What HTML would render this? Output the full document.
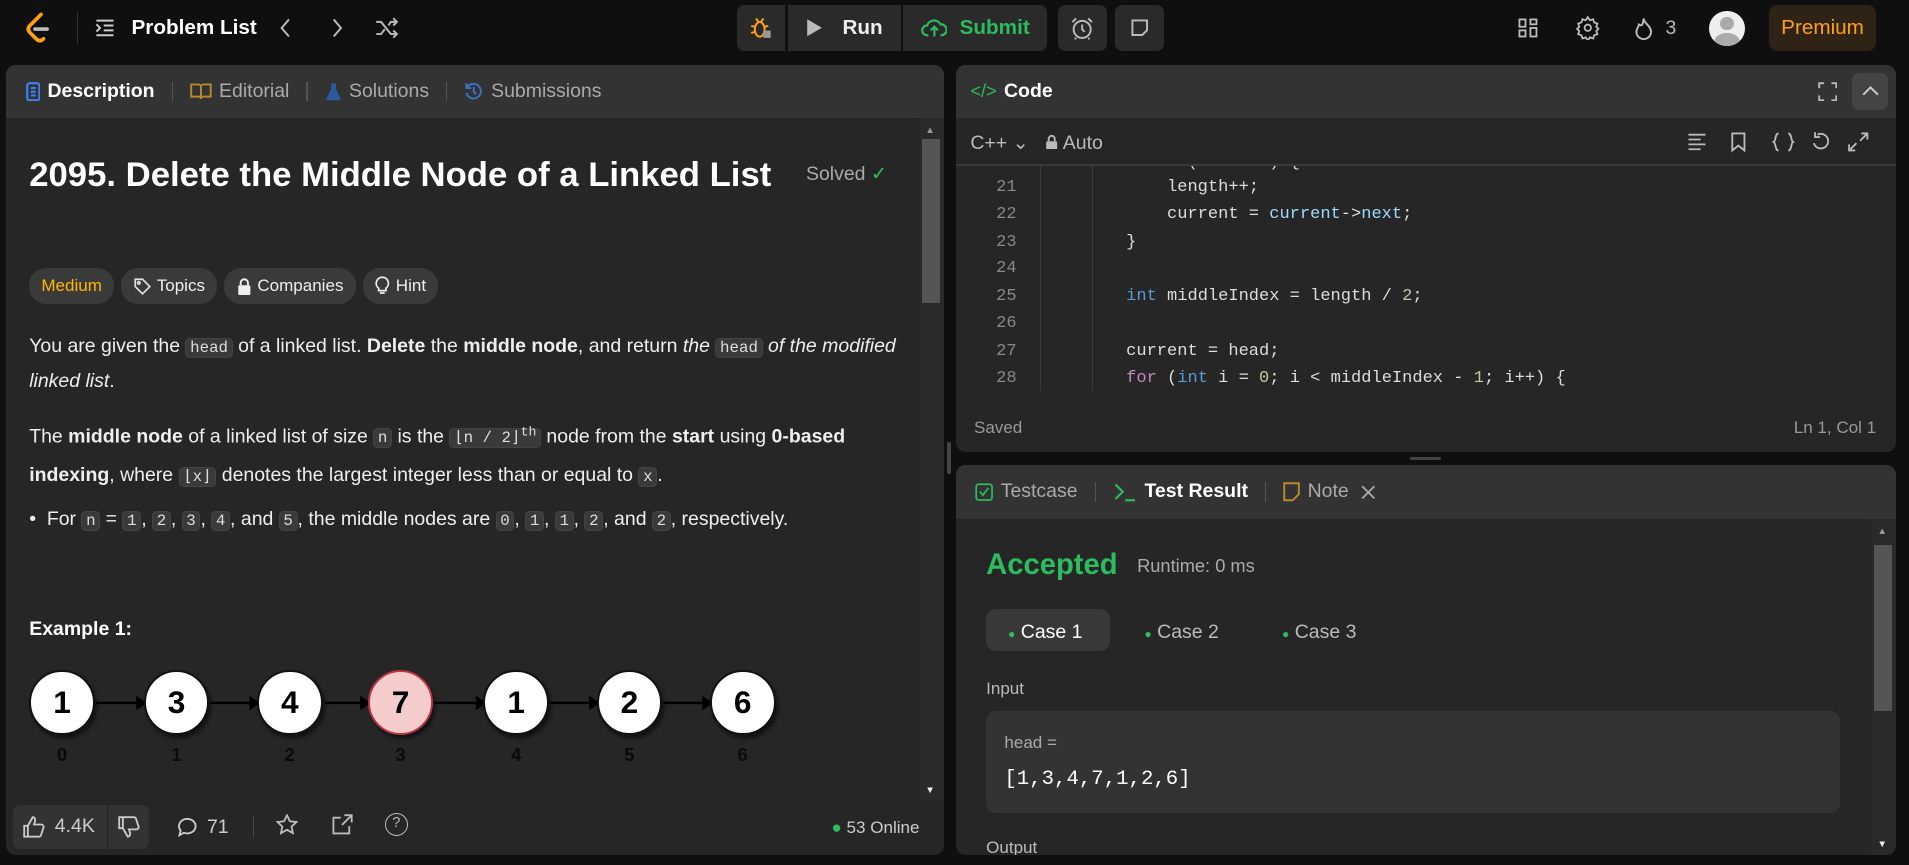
<!DOCTYPE html>
<html><head><meta charset="utf-8"><style>
*{box-sizing:border-box;margin:0;padding:0}
html,body{width:1909px;height:865px;overflow:hidden;background:#0f0f0f}
#r{zoom:1.21747;width:1568px;height:710px;position:relative;font-family:"Liberation Sans",sans-serif;color:#eee;font-size:14px}
.a{position:absolute}
.panel{position:absolute;background:#262626;border-radius:8px;overflow:hidden}
.hd{position:absolute;left:0;right:0;top:0;height:44px;background:#333;display:flex;align-items:center}
.tb{display:flex;align-items:center;gap:6px;color:#aaa;font-size:16px}
.sep{width:1px;height:16px;background:#555;margin:0 8px}
.code{font-family:"Liberation Mono",monospace}
.ic{background:#3a3a3a;border-radius:4px;padding:0 3px;font-family:"Liberation Mono",monospace;font-size:13px;color:#ddd;border:1px solid #444}
.pill{background:#3a3a3a;border-radius:14px;height:30px;padding:0 10px;display:flex;align-items:center;gap:5px;font-size:14px;color:#eee}
.node{position:absolute;width:54px;height:54px;border-radius:50%;background:#fff;border:2px solid #111;color:#000;font:bold 26px "Liberation Sans",sans-serif;display:flex;align-items:center;justify-content:center;box-shadow:2px 3px 3px rgba(0,0,0,.5)}
.idx{position:absolute;width:54px;text-align:center;color:#0a0a0a;font:bold 15px "Liberation Sans",sans-serif}
.ln{position:absolute;left:0;width:50px;text-align:right;color:#888}
.cl{position:absolute;left:140px;white-space:pre;color:#ddd}
.btn{position:absolute;top:4px;height:38px;background:#2a2a2a;display:flex;align-items:center;justify-content:center}
</style></head><body><div id="r">
<!-- top bar -->
<svg class="a" style="left:20px;top:10px" width="24" height="26" viewBox="0 0 24 26"><path d="M14 2 L5 11 Q2 14 5 17 L10 22 Q13 25 16 22" fill="none" stroke="#ffa116" stroke-width="3" stroke-linecap="round"/><path d="M9 14 H19" stroke="#bbb" stroke-width="3" stroke-linecap="round"/></svg>
<div class="a" style="left:63px;top:10px;width:1px;height:26px;background:#333"></div>
<svg class="a" style="left:77px;top:14px" width="18" height="18" viewBox="0 0 18 18" fill="none" stroke="#ccc" stroke-width="1.6"><path d="M2 3h14M8 7h8M8 11h8M2 15h14M2 6l3 3-3 3"/></svg>
<div class="a" style="left:108px;top:13px;font-size:17px;font-weight:bold;color:#fff">Problem List</div>
<svg class="a" style="left:228px;top:14px" width="12" height="18" viewBox="0 0 12 18" fill="none" stroke="#bbb" stroke-width="1.6"><path d="M9 2 3 9l6 7"/></svg>
<svg class="a" style="left:271px;top:14px" width="12" height="18" viewBox="0 0 12 18" fill="none" stroke="#bbb" stroke-width="1.6"><path d="M3 2l6 7-6 7"/></svg>
<svg class="a" style="left:308px;top:14px" width="20" height="18" viewBox="0 0 20 18" fill="none" stroke="#bbb" stroke-width="1.6"><path d="M1 4h4l8 10h5M1 14h4l3-4M11 7l2-3h5M15 1l3 3-3 3M15 11l3 3-3 3"/></svg>
<div class="btn" style="left:605px;width:40px;border-radius:6px 0 0 6px"><svg width="18" height="20" viewBox="0 0 18 20" fill="none" stroke="#ffa116" stroke-width="1.6"><ellipse cx="8" cy="11" rx="4" ry="6"/><path d="M1 8l3 1M1 14l3-1M15 8l-3 1M5 2l2 3M11 2l-2 3"/><rect x="11" y="12" width="6" height="6" fill="#999" stroke="none"/></svg></div>
<div class="btn" style="left:647px;width:93px;font-weight:bold;font-size:17px;color:#eee"><svg width="14" height="16" viewBox="0 0 14 16" style="margin-right:16px"><path d="M1 1l12 7-12 7z" fill="#bbb"/></svg>Run</div>
<div class="btn" style="left:742px;width:118px;border-radius:0 6px 6px 0;font-weight:bold;font-size:17px;color:#2cbb5d"><svg width="22" height="18" viewBox="0 0 22 18" style="margin-right:10px" fill="none" stroke="#2cbb5d" stroke-width="1.8"><path d="M6 15H5a4 4 0 0 1 0-8 6 6 0 0 1 11-1 4.5 4.5 0 0 1 1 9h-1"/><path d="M11 16V8M8 11l3-3 3 3"/></svg>Submit</div>
<div class="btn" style="left:869px;width:40px;border-radius:6px"><svg width="20" height="20" viewBox="0 0 20 20" fill="none" stroke="#bbb" stroke-width="1.6"><circle cx="10" cy="11" r="7"/><path d="M10 7v4l2 2M2 5l3-3M18 5l-3-3M5 18l-1 1M15 18l1 1"/></svg></div>
<div class="btn" style="left:916px;width:40px;border-radius:6px"><svg width="16" height="16" viewBox="0 0 16 16" fill="none" stroke="#bbb" stroke-width="1.6"><path d="M2 2h12v8l-4 4H2z"/></svg></div>
<svg class="a" style="left:1246px;top:14px" width="18" height="18" viewBox="0 0 18 18" fill="none" stroke="#bbb" stroke-width="1.5"><rect x="2" y="2" width="5" height="6"/><rect x="11" y="2" width="5" height="4"/><rect x="2" y="11" width="5" height="5"/><rect x="11" y="9" width="5" height="7"/></svg>
<svg class="a" style="left:1294px;top:12px" width="21" height="21" viewBox="0 0 24 24" fill="none" stroke="#bbb" stroke-width="1.7"><circle cx="12" cy="12" r="3"/><path d="M12 2l2 3 3-1 1 3 3 1-1 3 2 2-2 2 1 3-3 1-1 3-3-1-2 3-2-3-3 1-1-3-3-1 1-3-2-2 2-2-1-3 3-1 1-3 3 1z"/></svg>
<svg class="a" style="left:1342px;top:13px" width="16" height="20" viewBox="0 0 16 20" fill="none" stroke="#bbb" stroke-width="1.6"><path d="M8 2c0 4 6 6 6 11a6 6 0 0 1-12 0c0-3 2-4 2-6 2 1 3 2 4-5z"/></svg>
<div class="a" style="left:1368px;top:14px;font-size:16px;color:#bbb">3</div>
<div class="a" style="left:1404px;top:9px;width:29px;height:29px;border-radius:50%;background:#eee;overflow:hidden"><div class="a" style="left:9px;top:5px;width:11px;height:11px;border-radius:50%;background:#aaa"></div><div class="a" style="left:4px;top:18px;width:21px;height:16px;border-radius:50%;background:#aaa"></div></div>
<div class="a" style="left:1453px;top:4px;width:88px;height:38px;border-radius:7px;background:#2e2314;color:#ffa116;font-size:17px;display:flex;align-items:center;justify-content:center">Premium</div>

<!-- left panel -->
<div class="panel" style="left:5px;top:53px;width:770px;height:649px">
 <div class="hd" style="padding-left:16px"><div class="tb">
  <svg width="12" height="16" viewBox="0 0 12 16" fill="none" stroke="#3b82f6" stroke-width="1.8"><rect x="1" y="1" width="10" height="14" rx="2"/><path d="M4 5h4M4 8h4M4 11h4"/></svg><b style="color:#fff">Description</b><span class="sep"></span>
  <svg width="18" height="16" viewBox="0 0 18 16" fill="none" stroke="#b58a2a" stroke-width="1.6"><path d="M1 2h6a2 2 0 0 1 2 2v10a2 2 0 0 0-2-2H1zM17 2h-6a2 2 0 0 0-2 2v10a2 2 0 0 1 2-2h6z"/></svg>Editorial<span class="sep"></span>
  <svg width="14" height="16" viewBox="0 0 14 16"><path d="M5 1h4v5l4 8a1 1 0 0 1-1 1H2a1 1 0 0 1-1-1l4-8z" fill="#2a5aa0"/></svg>Solutions<span class="sep"></span>
  <svg width="16" height="16" viewBox="0 0 16 16" fill="none" stroke="#3a72c4" stroke-width="1.6"><path d="M3 4a6 6 0 1 1-1 5M2 1v4h4M8 4v4l2 2"/></svg>Submissions</div></div>
 <div class="a" style="right:0;top:44px;width:20px;height:561px;background:#2a2a2a"><div class="a" style="left:2px;top:17px;width:15px;height:135px;background:#555"></div><div class="a" style="left:5px;top:6px;color:#999;font-size:8px">▲</div><div class="a" style="left:5px;bottom:4px;color:#eee;font-size:8px">▼</div></div>
 <div class="a" style="left:19px;top:75px;font-size:28.5px;font-weight:bold;color:#fff">2095. Delete the Middle Node of a Linked List</div>
 <div class="a" style="left:657px;top:80px;font-size:16px;color:#aaa">Solved <span style="color:#2cbb5d">✓</span></div>
 <div class="a" style="left:19px;top:167px;display:flex;gap:6px"><div class="pill" style="color:#ffb800">Medium</div>
  <div class="pill"><svg width="14" height="14" viewBox="0 0 14 14" fill="none" stroke="#ddd" stroke-width="1.4"><path d="M1 1h6l6 6-6 6-6-6z"/><circle cx="4" cy="4" r="1"/></svg>Topics</div>
  <div class="pill"><svg width="12" height="14" viewBox="0 0 12 14"><path d="M3 6V4a3 3 0 0 1 6 0v2" fill="none" stroke="#eee" stroke-width="1.6"/><rect x="1" y="6" width="10" height="8" rx="1" fill="#eee"/></svg>Companies</div>
  <div class="pill"><svg width="12" height="16" viewBox="0 0 12 16" fill="none" stroke="#eee" stroke-width="1.4"><path d="M6 1a5 5 0 0 0-3 9v2h6v-2a5 5 0 0 0-3-9zM4 14h4"/></svg>Hint</div></div>
 <div class="a" style="left:19px;top:218px;width:712px;font-size:16px;line-height:27px;color:#eee">You are given the <span class="ic">head</span> of a linked list. <b>Delete</b> the <b>middle node</b>, and return <i>the</i> <span class="ic">head</span> <i>of the modified linked list</i>.</div>
 <div class="a" style="left:19px;top:288px;width:712px;font-size:16px;line-height:30px;color:#eee">The <b>middle node</b> of a linked list of size <span class="ic">n</span> is the <span class="ic">⌊n / 2⌋<sup>th</sup></span> node from the <b>start</b> using <b>0-<wbr>based indexing</b>, where <span class="ic">⌊x⌋</span> denotes the largest integer less than or equal to <span class="ic">x</span>.</div>
 <div class="a" style="left:19px;top:359px;font-size:16px;line-height:28px;color:#eee">•&nbsp;&nbsp;For <span class="ic">n</span> = <span class="ic">1</span>, <span class="ic">2</span>, <span class="ic">3</span>, <span class="ic">4</span>, and <span class="ic">5</span>, the middle nodes are <span class="ic">0</span>, <span class="ic">1</span>, <span class="ic">1</span>, <span class="ic">2</span>, and <span class="ic">2</span>, respectively.</div>
 <div class="a" style="left:19px;top:455px;font-size:16px;font-weight:bold;color:#fff">Example 1:</div>
 <svg class="a" style="left:0;top:0" width="760" height="640"><g stroke="#000" stroke-width="2" fill="#000"><path d="M74 524H110M168 524H203M262 524H294M352 524H389M447 524H482M540 524H575"/><path d="M114 524l-6-4v8zM207 524l-6-4v8zM298 524l-6-4v8zM393 524l-6-4v8zM486 524l-6-4v8zM579 524l-6-4v8z"/></g></svg>
 <div class="node" style="left:19px;top:497px">1</div><div class="node" style="left:113px;top:497px">3</div><div class="node" style="left:206px;top:497px">4</div><div class="node" style="left:297px;top:497px;background:#f5cccc;border-color:#b34">7</div><div class="node" style="left:392px;top:497px">1</div><div class="node" style="left:485px;top:497px">2</div><div class="node" style="left:578px;top:497px">6</div>
 <div class="idx" style="left:19px;top:558px">0</div><div class="idx" style="left:113px;top:558px">1</div><div class="idx" style="left:206px;top:558px">2</div><div class="idx" style="left:297px;top:558px">3</div><div class="idx" style="left:392px;top:558px">4</div><div class="idx" style="left:485px;top:558px">5</div><div class="idx" style="left:578px;top:558px">6</div>
 <div class="a" style="left:6px;top:608px;height:36px;background:#333;border-radius:6px;display:flex;align-items:center;padding:0 8px;gap:8px;font-size:16px;color:#ccc">
  <svg width="18" height="18" viewBox="0 0 18 18" fill="none" stroke="#ccc" stroke-width="1.5"><path d="M1 8h3v9H1zM4 8l4-7c2 0 2 2 2 3l-1 3h6a2 2 0 0 1 2 2l-2 6a2 2 0 0 1-2 2H4"/></svg>4.4K
  <span style="border-left:1px solid #222;height:36px;margin-left:2px"></span>
  <svg width="18" height="18" viewBox="0 0 18 18" fill="none" stroke="#ccc" stroke-width="1.5"><path d="M1 1h3v9H1zM4 10l4 7c2 0 2-2 2-3l-1-3h6a2 2 0 0 0 2-2l-2-6a2 2 0 0 0-2-2H4"/></svg></div>
 <div class="a" style="left:140px;top:617px;font-size:16px;color:#ccc;display:flex;gap:8px;align-items:center"><svg width="17" height="17" viewBox="0 0 17 17" fill="none" stroke="#ccc" stroke-width="1.5"><path d="M8.5 1.5a7 6 0 1 1-3 11.5L2 15l1-4a7 6 0 0 1 5.5-9.5z"/></svg>71</div>
 <div class="a" style="left:203px;top:617px;width:1px;height:18px;background:#444"></div>
 <svg class="a" style="left:222px;top:616px" width="18" height="18" viewBox="0 0 18 18" fill="none" stroke="#bbb" stroke-width="1.5"><path d="M9 1l2.4 5 5.4.6-4 3.7 1.1 5.4L9 13l-4.9 2.7 1.1-5.4-4-3.7L6.6 6z"/></svg>
 <svg class="a" style="left:267px;top:616px" width="18" height="18" viewBox="0 0 18 18" fill="none" stroke="#bbb" stroke-width="1.5"><path d="M8 3H2v13h13v-6M11 1h6v6M17 1l-8 8"/></svg>
 <div class="a" style="left:311px;top:615px;width:19px;height:19px;border:1.6px solid #bbb;border-radius:50%;color:#bbb;font-size:12px;text-align:center;line-height:16px">?</div>
 <div class="a" style="left:678px;top:619px;font-size:14px;color:#ccc"><span style="color:#2cbb5d">●</span> 53 Online</div>
</div>

<!-- code panel -->
<div class="panel" style="left:785px;top:53px;width:772px;height:318px">
 <div class="hd" style="padding-left:12px"><span style="color:#2cbb5d;font-size:15px">&lt;/&gt;</span><b style="margin-left:6px;font-size:16px;color:#fff">Code</b></div>
 <svg class="a" style="right:48px;top:14px" width="16" height="16" viewBox="0 0 16 16" fill="none" stroke="#bbb" stroke-width="1.5"><path d="M1 5V1h4M11 1h4v4M15 11v4h-4M5 15H1v-4"/></svg>
 <div class="a" style="right:6px;top:7px;width:30px;height:30px;background:#444;border-radius:6px"><svg class="a" style="left:8px;top:10px" width="14" height="9" viewBox="0 0 14 9" fill="none" stroke="#ccc" stroke-width="1.6"><path d="M1 8l6-6 6 6"/></svg></div>
 <div class="a" style="left:12px;top:55px;font-size:16px;color:#bbb">C++ ⌄ &nbsp;&nbsp;<svg width="11" height="13" viewBox="0 0 11 13"><path d="M3 6V4a2.5 2.5 0 0 1 5 0v2" fill="none" stroke="#bbb" stroke-width="1.5"/><rect x="1" y="6" width="9" height="7" rx="1" fill="#bbb"/></svg> Auto</div>
 <svg class="a" style="right:12px;top:55px" width="160" height="18" viewBox="0 0 160 18" fill="none" stroke="#bbb" stroke-width="1.5"><path d="M2 3h14M2 7h10M2 11h14M2 15h10"/><path d="M38 2h10v14l-5-4-5 4z"/><path d="M76 2c-3 0-2 6-4 7 2 1 1 7 4 7M84 2c3 0 2 6 4 7-2 1-1 7-4 7"/><path d="M108 3a6 6 0 1 1-3 7M106 1v4h4"/><path d="M144 2h5v5M149 2l-6 6M139 16h-5v-5M134 16l6-6"/></svg>
 <div class="a" style="left:0;right:0;top:82px;height:1px;background:#3a3a3a"></div>
 <div class="a code" style="left:0;top:83px;width:760px;height:185px;overflow:hidden;font-size:14px">
  <div class="a" style="left:69px;top:0;width:1px;height:185px;background:#3a3a3a"></div>
  <div class="a" style="left:112px;top:0;width:1px;height:185px;background:#3a3a3a"></div>
  <div class="ln" style="top:-10px">20</div><div class="cl" style="top:-10px">while (current) {</div>
  <div class="ln" style="top:10px">21</div><div class="cl" style="top:10px">    length++;</div>
  <div class="ln" style="top:32px">22</div><div class="cl" style="top:32px">    current = <span style="color:#9cdcfe">current</span>-&gt;<span style="color:#9cdcfe">next</span>;</div>
  <div class="ln" style="top:55px">23</div><div class="cl" style="top:55px">}</div>
  <div class="ln" style="top:77px">24</div>
  <div class="ln" style="top:100px">25</div><div class="cl" style="top:100px"><span style="color:#569cd6">int</span> middleIndex = length / <span style="color:#b5cea8">2</span>;</div>
  <div class="ln" style="top:122px">26</div>
  <div class="ln" style="top:145px">27</div><div class="cl" style="top:145px">current = head;</div>
  <div class="ln" style="top:167px">28</div><div class="cl" style="top:167px"><span style="color:#c586c0">for</span> (<span style="color:#569cd6">int</span> i = <span style="color:#b5cea8">0</span>; i &lt; middleIndex - <span style="color:#b5cea8">1</span>; i++) {</div>
 </div>
 <div class="a" style="left:15px;top:290px;font-size:14px;color:#999">Saved</div>
 <div class="a" style="right:16px;top:290px;font-size:14px;color:#999">Ln 1, Col 1</div>
</div>
<div class="a" style="left:1158px;top:375px;width:26px;height:3px;border-radius:2px;background:#444"></div>
<div class="a" style="left:778px;top:363px;width:3px;height:26px;border-radius:2px;background:#444"></div>

<!-- test result panel -->
<div class="panel" style="left:785px;top:382px;width:772px;height:320px">
 <div class="hd" style="padding-left:16px"><div class="tb">
  <svg width="15" height="15" viewBox="0 0 15 15" fill="none" stroke="#2cbb5d" stroke-width="1.4"><rect x="1" y="1" width="13" height="13" rx="2"/><path d="M4 7l2.5 3L11 4"/></svg>Testcase<span class="sep"></span>
  <svg width="20" height="16" viewBox="0 0 20 16" fill="none" stroke="#2cbb5d" stroke-width="1.8"><path d="M2 2l6 6-6 6M10 15h8"/></svg><b style="color:#fff">Test Result</b><span class="sep"></span>
  <svg width="14" height="16" viewBox="0 0 14 16" fill="none" stroke="#b58a2a" stroke-width="1.6"><path d="M1 1h12v9l-5 5H1z"/></svg>Note <svg width="12" height="12" viewBox="0 0 12 12" style="margin-left:4px" stroke="#aaa" stroke-width="1.5"><path d="M1 1l10 10M11 1L1 11"/></svg></div></div>
 <div class="a" style="right:0;top:44px;width:20px;height:276px;background:#2a2a2a"><div class="a" style="left:2px;top:22px;width:15px;height:136px;background:#555"></div><div class="a" style="left:5px;top:6px;color:#999;font-size:8px">▲</div><div class="a" style="left:5px;bottom:4px;color:#eee;font-size:8px">▼</div></div>
 <div class="a" style="left:25px;top:69px;font-size:24px;font-weight:bold;color:#2cbb5d">Accepted</div>
 <div class="a" style="left:149px;top:74px;font-size:15px;color:#aaa">Runtime: 0 ms</div>
 <div class="a" style="left:25px;top:118px;width:102px;height:35px;background:#383838;border-radius:8px"></div>
 <div class="a" style="left:43px;top:128px;font-size:16px;color:#fff"><span style="color:#2cbb5d;font-size:10px">●</span> Case 1</div>
 <div class="a" style="left:155px;top:128px;font-size:16px;color:#bbb"><span style="color:#2cbb5d;font-size:10px">●</span> Case 2</div>
 <div class="a" style="left:268px;top:128px;font-size:16px;color:#bbb"><span style="color:#2cbb5d;font-size:10px">●</span> Case 3</div>
 <div class="a" style="left:25px;top:176px;font-size:14px;color:#bbb">Input</div>
 <div class="a" style="left:25px;top:202px;width:701px;height:84px;background:#333;border-radius:8px"></div>
 <div class="a" style="left:40px;top:220px;font-size:14px;color:#aaa">head =</div>
 <div class="a code" style="left:40px;top:249px;font-size:17px;color:#fff">[1,3,4,7,1,2,6]</div>
 <div class="a" style="left:25px;top:306px;font-size:14px;color:#bbb">Output</div>
</div>
</div></body></html>
